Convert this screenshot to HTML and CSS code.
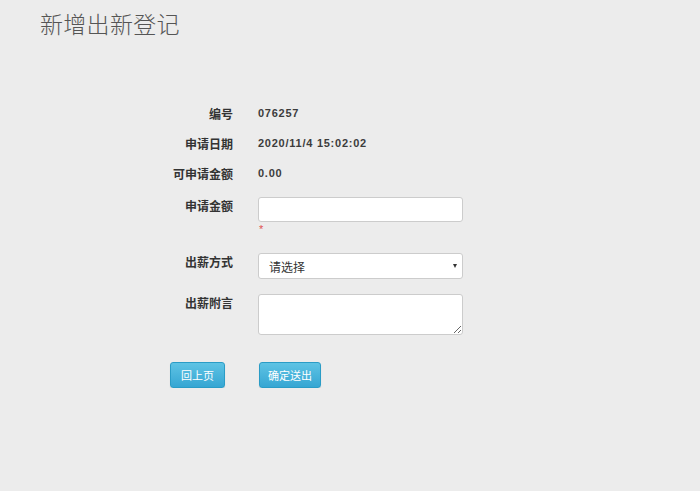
FILE: index.html
```html
<!DOCTYPE html>
<html lang="zh-CN">
<head>
    <meta charset="UTF-8">
    <meta name="viewport" content="width=device-width, initial-scale=1.0">
    <title>新增出薪登记</title>
    <link rel="stylesheet" href="styles.css">
</head>
<body>
    <h1 class="page_title">新增出新登记</h1>

    <div class="form">
        <div class="row">
            <span class="label">编号</span>
            <span class="value">076257</span>
        </div>
        <div class="row">
            <span class="label">申请日期</span>
            <span class="value">2020/11/4 15:02:02</span>
        </div>
        <div class="row">
            <span class="label">可申请金额</span>
            <span class="value">0.00</span>
        </div>
        <div class="row field_row first_field">
            <span class="label">申请金额</span>
            <div class="field">
                <input type="text" class="text_input" name="amount">
                <span class="required">*</span>
            </div>
        </div>
        <div class="row field_row">
            <span class="label">出薪方式</span>
            <div class="field select_wrap">
                <select class="select_input" name="method">
                    <option>请选择</option>
                </select>
            </div>
        </div>
        <div class="row field_row">
            <span class="label">出薪附言</span>
            <div class="field">
                <textarea class="text_area" name="note"></textarea>
            </div>
        </div>
        <div class="row button_row">
            <div class="label">
                <button class="button back_btn" type="button">回上页</button>
            </div>
            <button class="button submit_btn" type="submit">确定送出</button>
        </div>
    </div>
</body>
</html>
```

FILE: styles.css
```css
body {
    margin: 0;
    background-color: #ececec;
    font-family: "Liberation Sans", "Noto Sans CJK SC", sans-serif;
    color: #333;
}
.page_title {
    margin: 0;
    padding: 8px 0 0 40px;
    font-family: "Noto Sans CJK SC", sans-serif;
    font-size: 23px;
    font-weight: 300;
    line-height: 30px;
    letter-spacing: 0.3px;
    color: #555;
}
.form {
    margin-top: 60px;
    padding-left: 153px;
}
.row {
    display: flex;
    align-items: center;
    height: 30px;
}
.label {
    width: 80px;
    margin-right: 25px;
    text-align: right;
    font-family: "Noto Sans CJK SC", sans-serif;
    font-size: 12px;
    font-weight: bold;
    color: #333;
}
.value {
    font-size: 11px;
    font-weight: bold;
    letter-spacing: 0.75px;
    color: #3c3c3c;
}
.field_row {
    height: auto;
    align-items: flex-start;
    margin-top: 15px;
}
.field_row .label {
    line-height: 17px;
}
.first_field {
    margin-top: 9px;
}
.field {
    display: flex;
    flex-direction: column;
    width: 205px;
}
.text_input,
.select_input,
.text_area {
    box-sizing: border-box;
    width: 205px;
    margin: 0;
    border: 1px solid #ccc;
    border-radius: 3px;
    background-color: #fff;
    font-family: "Noto Sans CJK SC", sans-serif;
    font-size: 12px;
    color: #333;
}
.text_input {
    height: 25px;
    padding: 0 8px;
}
.required {
    height: 16px;
    padding-left: 1px;
    font-size: 11px;
    line-height: 14px;
    color: #e05050;
}
.select_wrap {
    position: relative;
}
.select_input {
    height: 26px;
    padding: 0 10px;
    appearance: none;
    -webkit-appearance: none;
}
.select_wrap::after {
    content: "";
    position: absolute;
    right: 6px;
    top: 11px;
    border-left: 2.5px solid transparent;
    border-right: 2.5px solid transparent;
    border-top: 4px solid #333;
}
.text_area {
    height: 41px;
    padding: 4px 8px;
    resize: vertical;
}
.button_row {
    height: 26px;
    margin-top: 27px;
}
.button_row .label {
    display: flex;
    justify-content: flex-end;
}
.button {
    height: 26px;
    padding: 0 10px;
    border: 1px solid #2a9cc6;
    border-radius: 3px;
    background: linear-gradient(#5ec3e4, #36a6d3);
    color: #fff;
    font-family: "Noto Sans CJK SC", sans-serif;
    font-size: 11px;
    box-shadow: 0 1px 1px rgba(0, 0, 0, 0.15);
}
.back_btn {
    margin-right: 8px;
}
.submit_btn {
    margin-left: 1px;
    padding: 0 8px;
}
```
